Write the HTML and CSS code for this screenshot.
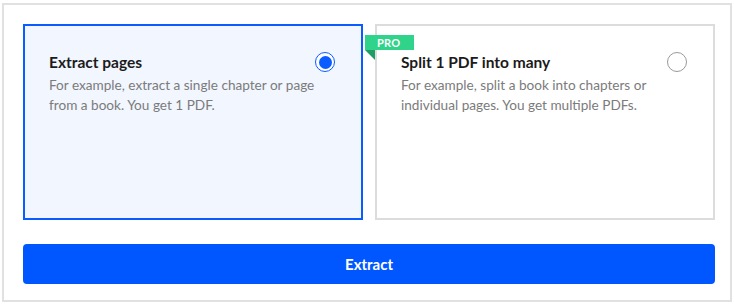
FILE: index.html
```html
<!DOCTYPE html>
<html>
<head>
<meta charset="utf-8">
<link rel="stylesheet" href="styles.css">
</head>
<body>
<div class="frame">
  <div class="options">
    <div class="card card-active">
      <div class="card-title">Extract pages</div>
      <span class="radio radio-on"><span class="dot"></span></span>
      <div class="card-desc">For example, extract a single chapter or page from a book. You get 1 PDF.</div>
    </div>
    <div class="card">
      <span class="badge">PRO</span>
      <div class="card-title">Split 1 PDF into many</div>
      <span class="radio"></span>
      <div class="card-desc">For example, split a book into chapters or individual pages. You get multiple PDFs.</div>
    </div>
  </div>
  <button class="btn">Extract</button>
</div>
</body>
</html>
```
FILE: styles.css
```css
* { box-sizing: border-box; }
body {
  margin: 0;
  background: #fff;
  font-family: Lato, "Liberation Sans", sans-serif;
}
.frame {
  width: 730px;
  margin: 3px 0 0 2px;
  border: 2px solid #e1e1e1;
  padding: 19px 15px 16px 19px;
}
.options {
  display: grid;
  grid-template-columns: 340px 340px;
  gap: 12px;
}
.card {
  position: relative;
  height: 196px;
  border: 2px solid #dcdcdc;
  background: #fff;
  display: grid;
  grid-template-columns: 1fr 20px;
  grid-template-rows: auto auto;
  align-content: start;
  column-gap: 8px;
  padding: 24px 26px 24px 24px;
}
.card-active {
  border-color: #0a5cff;
  background: #f1f6ff;
}
.card-title {
  font-size: 15.5px;
  font-weight: 700;
  color: #1b1b1b;
  line-height: 24px;
}
.card-desc {
  grid-column: 1 / 3;
  margin-top: 1px;
  font-size: 13.6px;
  color: #7b7b7b;
  line-height: 20px;
}
.radio {
  width: 20px;
  height: 20px;
  margin-top: 2px;
  border-radius: 50%;
  border: 1px solid #9a9a9a;
  background: #fff;
  display: flex;
  align-items: center;
  justify-content: center;
}
.radio-on {
  border: 1.5px solid #0a5cff;
}
.dot {
  width: 13px;
  height: 13px;
  border-radius: 50%;
  background: #0a5cff;
}
.badge {
  position: absolute;
  left: -12px;
  top: 9px;
  height: 15px;
  padding: 0 13px 0 12px;
  background: #2fd38a;
  color: #fff;
  font-size: 11px;
  font-weight: 700;
  line-height: 15px;
  letter-spacing: 0.3px;
}
.badge::after {
  content: "";
  position: absolute;
  left: 0;
  top: 15px;
  border-top: 10px solid #1e9e63;
  border-left: 10px solid transparent;
}
.btn {
  display: block;
  width: 100%;
  height: 40px;
  margin-top: 24px;
  border: 0;
  border-radius: 4px;
  background: #0057ff;
  color: #fff;
  font-family: inherit;
  font-size: 15px;
  font-weight: 700;
  cursor: pointer;
}
```
